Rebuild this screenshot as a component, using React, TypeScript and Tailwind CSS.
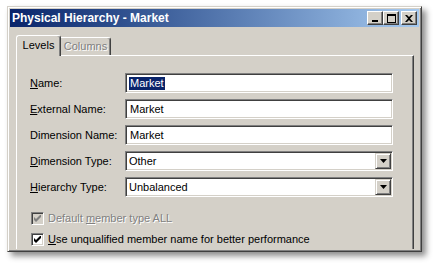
import type { ReactNode } from 'react';

const FONT = "font-['Liberation_Sans',Arial,sans-serif]";

function TitleButton({ children }: { children: ReactNode }) {
  return (
    <div className="w-[16px] h-[14px] bg-[#d4d0c8] border border-t-white border-l-white border-r-[#404040] border-b-[#404040] shadow-[inset_-1px_-1px_0_#808080] flex items-center justify-center">
      {children}
    </div>
  );
}

function TextField({ value, selected }: { value: string; selected?: boolean }) {
  return (
    <div className="flex-1 h-[20px] bg-white border border-t-[#808080] border-l-[#808080] border-r-white border-b-white shadow-[inset_1px_1px_0_#404040,inset_-1px_-1px_0_#d4d0c8] flex items-center pl-[4px]">
      <span className={selected ? 'bg-[#0a246a] text-white leading-[13px] px-px -ml-px' : 'leading-[13px]'}>
        {value}
      </span>
    </div>
  );
}

function SelectField({ value }: { value: string }) {
  return (
    <div className="flex-1 h-[20px] bg-white border border-t-[#808080] border-l-[#808080] border-r-white border-b-white shadow-[inset_1px_1px_0_#404040,inset_-1px_-1px_0_#d4d0c8] flex items-center p-px">
      <span className="flex-1 pl-[2px] leading-[13px]">{value}</span>
      <div className="w-[16px] h-[16px] bg-[#d4d0c8] border border-t-[#d4d0c8] border-l-[#d4d0c8] border-r-[#404040] border-b-[#404040] shadow-[inset_1px_1px_0_white,inset_-1px_-1px_0_#808080] flex items-center justify-center">
        <svg width="7" height="4" viewBox="0 0 7 4">
          <path d="M0 0h7L3.5 4z" fill="black" />
        </svg>
      </div>
    </div>
  );
}

function Row({ label, children }: { label: ReactNode; children: ReactNode }) {
  return (
    <div className="flex items-center h-[20px]">
      <div className="w-[95px] shrink-0">{label}</div>
      {children}
    </div>
  );
}

function CheckBox({ checked, disabled }: { checked: boolean; disabled?: boolean }) {
  return (
    <div
      className={`w-[13px] h-[13px] ml-px border border-t-[#808080] border-l-[#808080] border-r-white border-b-white shadow-[inset_1px_1px_0_#404040,inset_-1px_-1px_0_#d4d0c8] flex items-center justify-center ${
        disabled ? 'bg-[#d4d0c8]' : 'bg-white'
      }`}
    >
      {checked && (
        <svg width="7" height="7" viewBox="0 0 7 7">
          <path d="M0 2v3l2 2 5-5V-1L2 4z" fill={disabled ? '#808080' : 'black'} />
        </svg>
      )}
    </div>
  );
}

export default function App() {
  return (
    <div className={`w-[436px] h-[267px] bg-white overflow-hidden pt-[6px] pl-[7px] text-[11px] text-black ${FONT}`}>
      <div className="w-[415px] h-[246px] bg-[#d4d0c8] border border-t-[#d4d0c8] border-l-[#d4d0c8] border-r-[#404040] border-b-[#404040] shadow-[inset_1px_1px_0_white,inset_-1px_-1px_0_#808080,4px_4px_6px_rgba(0,0,0,0.45)] p-[2px] flex flex-col overflow-hidden">
        {/* title bar */}
        <div className="h-[18px] shrink-0 flex items-center pl-[2px] pr-[2px] bg-gradient-to-r from-[#0a246a] to-[#a6caf0]">
          <span className="flex-1 text-white font-bold text-[12px] leading-none">
            Physical Hierarchy - Market
          </span>
          <TitleButton>
            <svg width="8" height="8" viewBox="0 0 8 8">
              <rect x="1" y="6" width="6" height="2" fill="black" />
            </svg>
          </TitleButton>
          <TitleButton>
            <svg width="9" height="9" viewBox="0 0 9 9">
              <path d="M0 0h9v9H0zM1 2v6h7V2z" fill="black" fillRule="evenodd" />
            </svg>
          </TitleButton>
          <div className="w-[2px]" />
          <TitleButton>
            <svg width="8" height="7" viewBox="0 0 8 7">
              <path d="M0 0h2l2 2 2-2h2L5 3.5 8 7H6L4 5 2 7H0l3-3.5z" fill="black" />
            </svg>
          </TitleButton>
        </div>

        {/* tabs */}
        <div className="mt-[8px] pl-[6px] flex items-end h-[20px] relative z-10">
          <div className="h-[21px] -mb-px w-[45px] bg-[#d4d0c8] border-t border-l border-white border-r border-r-[#404040] shadow-[inset_-1px_0_0_#808080] rounded-t-[3px] flex items-center justify-center pb-[2px]">
            Levels
          </div>
          <div className="h-[18px] w-[50px] bg-[#d4d0c8] border-t border-white border-r border-r-[#404040] shadow-[inset_-1px_0_0_#808080] rounded-tr-[3px] flex items-center justify-center text-[#808080] [text-shadow:1px_1px_0_white]">
            Columns
          </div>
        </div>

        {/* panel */}
        <div className="ml-[6px] mr-[5px] flex-1 border-t border-l border-white border-r border-r-[#404040] shadow-[inset_-1px_0_0_#808080] pt-[17px] pl-[13px] pr-[20px]">
          <div className="flex flex-col gap-[6px]">
            <Row label={<><u>N</u>ame:</>}>
              <TextField value="Market" selected />
            </Row>
            <Row label={<><u>E</u>xternal Name:</>}>
              <TextField value="Market" />
            </Row>
            <Row label="Dimension Name:">
              <TextField value="Market" />
            </Row>
            <Row label={<><u>D</u>imension Type:</>}>
              <SelectField value="Other" />
            </Row>
            <Row label={<><u>H</u>ierarchy Type:</>}>
              <SelectField value="Unbalanced" />
            </Row>
          </div>

          <div className="mt-[13px] flex flex-col gap-[5px]">
            <div className="h-[16px] flex items-center gap-[4px]">
              <CheckBox checked disabled />
              <span className="text-[#808080] [text-shadow:1px_1px_0_white]">
                Default <u>m</u>ember type ALL
              </span>
            </div>
            <div className="h-[16px] flex items-center gap-[4px]">
              <CheckBox checked />
              <span>
                <u>U</u>se unqualified member name for better performance
              </span>
            </div>
          </div>
        </div>
      </div>
    </div>
  );
}
